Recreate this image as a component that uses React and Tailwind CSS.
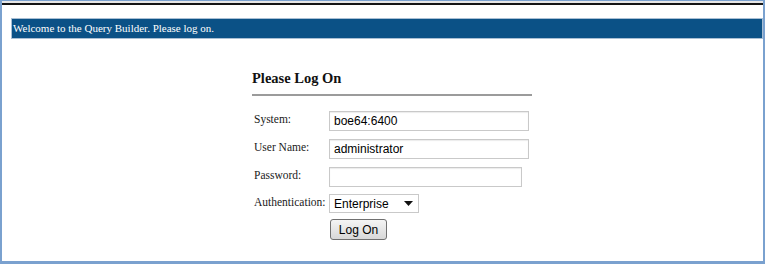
import React from "react"

const serif = { fontFamily: '"Liberation Serif", "Times New Roman", serif' }
const sans = { fontFamily: '"Liberation Sans", Arial, sans-serif' }

const Field = ({ label, value, width, top }) => (
  <div className={`flex items-start ${top}`}>
    <div className="w-[75px] pt-[1px] text-[11.5px] leading-[14px] text-[#1a1a1a]" style={serif}>
      {label}
    </div>
    <div
      className={`${width} h-[20px] border border-[#c9c9c9] shadow-[inset_0_1px_1px_rgba(0,0,0,0.08)] bg-white flex items-center pl-[4px] text-[12px] text-black`}
      style={sans}
    >
      {value}
    </div>
  </div>
)

const App = () => {
  return (
    <div className="w-[765px] h-[264px] bg-white border-t border-l-2 border-r-2 border-b-[3px] border-[#7aa1cf] flex flex-col overflow-hidden">
      <div className="h-[2px] bg-[#e6e6e6]" />
      <div className="h-[2px] bg-[#141414]" />

      <div
        className="ml-[9px] mt-[13px] h-[21px] bg-[#0b5186] border border-[#a9bfd4] flex items-center pl-[1px] text-[11px] text-white"
        style={serif}
      >
        Welcome to the Query Builder. Please log on.
      </div>

      <div className="ml-[250px] mt-[30px] w-[280px]">
        <h1 className="text-[14.5px] font-bold leading-[18px] text-[#111] pb-[7px] border-b-2 border-[#9b9b9b]" style={serif}>
          Please Log On
        </h1>

        <div className="pl-[2px]">
          <Field label="System:" value="boe64:6400" width="w-[200px]" top="mt-[15px]" />
          <Field label="User Name:" value="administrator" width="w-[200px]" top="mt-[8px]" />
          <Field label="Password:" value="" width="w-[193px]" top="mt-[8px]" />

          <div className="flex items-start mt-[7px]">
            <div className="w-[75px] pt-[1px] text-[11.5px] leading-[14px] text-[#1a1a1a]" style={serif}>
              Authentication:
            </div>
            <div
              className="w-[90px] h-[19px] border border-[#c9c9c9] bg-white flex items-center justify-between pl-[4px] pr-[5px] text-[12px] text-black"
              style={sans}
            >
              <span>Enterprise</span>
              <svg width="9" height="5" viewBox="0 0 9 5">
                <path d="M0 0 L9 0 L4.5 5 Z" fill="#111" />
              </svg>
            </div>
          </div>

          <div className="flex mt-[6px] pl-[76px]">
            <button
              className="w-[57px] h-[21px] rounded-[3px] border border-[#707070] bg-gradient-to-b from-[#f4f4f4] to-[#d8d8d8] text-[12px] text-black flex items-center justify-center"
              style={sans}
            >
              Log On
            </button>
          </div>
        </div>
      </div>
    </div>
  )
}

export default App
